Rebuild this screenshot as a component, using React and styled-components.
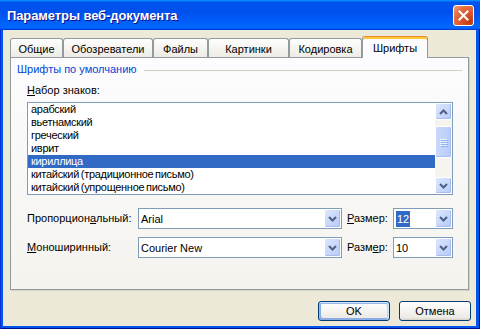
import styled, { createGlobalStyle } from "styled-components";

const GlobalStyle = createGlobalStyle`
  html, body {
    margin: 0;
    padding: 0;
  }
  body {
    width: 480px;
    height: 329px;
    overflow: hidden;
    font-family: "Liberation Sans", Arial, sans-serif;
    font-size: 11px;
    color: #000;
  }
`;

//Style Components :

const Window = styled.div`
  width: 480px;
  height: 329px;
  display: flex;
  flex-direction: column;
  background: #0054e3;
`;

const TitleBar = styled.div`
  height: 30px;
  flex-shrink: 0;
  display: flex;
  align-items: center;
  justify-content: space-between;
  padding: 0 6px 0 7px;
  background: linear-gradient(
    180deg,
    #0997ff,
    #0053ee 8%,
    #0050ee 40%,
    #06f 88%,
    #06f 93%,
    #005bff 95%,
    #003dd7 96%,
    #003dd7
  );
`;

const Title = styled.div`
  font-family: "Liberation Sans", Arial, sans-serif;
  font-weight: 700;
  font-size: 13px;
  color: #fff;
  letter-spacing: -0.1px;
  text-shadow: 1px 1px #0f1089;
`;

const CloseButton = styled.div`
  width: 19px;
  height: 19px;
  border: 1px solid #fff;
  border-radius: 3px;
  display: flex;
  align-items: center;
  justify-content: center;
  background: radial-gradient(
    circle at 85% 85%,
    #c23a10 0%,
    #dd5a2d 45%,
    #e56f44 70%,
    #f2a384 100%
  );
`;

const Frame = styled.div`
  flex: 1;
  display: flex;
  padding: 0 4px 3px 3px;
  background: #0055ea;
  box-shadow: inset 1px 0 #0831d9, inset -1px -1px #00138c;
`;

const Client = styled.div`
  flex: 1;
  display: flex;
  flex-direction: column;
  background: #ece9d8;
  padding: 6px 5px 0 7px;
`;

const TabStrip = styled.div`
  height: 21px;
  display: flex;
  align-items: flex-end;
`;

const Tab = styled.div`
  position: relative;
  box-sizing: border-box;
  width: ${(p) => p.$width}px;
  height: ${(p) => (p.$active ? 22 : 19)}px;
  margin-bottom: ${(p) => (p.$active ? -1 : 0)}px;
  z-index: ${(p) => (p.$active ? 2 : 0)};
  display: flex;
  justify-content: center;
  padding-top: ${(p) => (p.$active ? 5 : 4)}px;
  border: 1px solid #919b9c;
  border-bottom: none;
  border-radius: 3px 3px 0 0;
  background: ${(p) =>
    p.$active
      ? "#fcfcfe"
      : "linear-gradient(180deg, #fefefe, #f4f3ee 60%, #ecebe6)"};
  ${(p) =>
    p.$active &&
    `
    border-top: 1px solid #e68b2c;
    box-shadow: inset 0 2px #ffc73c;
  `}
`;

const Panel = styled.div`
  height: 233px;
  margin-right: 2px;
  border: 1px solid #919b9c;
  box-sizing: border-box;
  background: linear-gradient(180deg, #fcfcfe, #f4f3ee);
  box-shadow: 1px 1px 0 #d6d3c6;
  display: flex;
  flex-direction: column;
`;

const GroupHeading = styled.div`
  height: 14px;
  margin-top: 4px;
  padding: 0 6px;
  display: flex;
  align-items: center;
  gap: 7px;
  color: #0046d5;

  &::after {
    content: "";
    flex: 1;
    height: 1px;
    margin-top: 2px;
    background: #d0d0bf;
  }
`;

const Content = styled.div`
  padding-left: 16px;
  display: flex;
  flex-direction: column;
`;

const FieldLabel = styled.div`
  height: 14px;
  line-height: 14px;
  margin-top: 7px;
`;

const ListBox = styled.div`
  width: 426px;
  height: 93px;
  box-sizing: border-box;
  margin-top: 5px;
  border: 1px solid #7f9db9;
  background: #fff;
  display: flex;
`;

const Items = styled.div`
  flex: 1;
`;

const Item = styled.div`
  height: 13px;
  line-height: 13px;
  padding-left: 3px;
  white-space: nowrap;
  letter-spacing: -0.3px;
  word-spacing: -1px;
  background: ${(p) => (p.$selected ? "#316ac5" : "transparent")};
  color: ${(p) => (p.$selected ? "#fff" : "#000")};
`;

const ScrollBar = styled.div`
  width: 17px;
  display: flex;
  flex-direction: column;
  background: #f5f4ef;
`;

const ScrollButton = styled.div`
  height: 17px;
  box-sizing: border-box;
  border: 1px solid #fff;
  border-radius: 2px;
  background: linear-gradient(135deg, #dce7fd, #b8cbf9);
  box-shadow: inset -1px -1px #a7bdef;
  display: flex;
  align-items: center;
  justify-content: center;
`;

const Track = styled.div`
  flex: 1;
  padding-top: 6px;
`;

const Thumb = styled.div`
  height: 32px;
  box-sizing: border-box;
  border: 1px solid #fff;
  border-radius: 2px;
  background: linear-gradient(90deg, #c9d8fc, #b9ccf9);
  box-shadow: inset -1px -1px #a7bdef;
  display: flex;
  flex-direction: column;
  align-items: center;
  justify-content: center;
  gap: 1px;
`;

const Grip = styled.div`
  width: 7px;
  height: 1px;
  background: #eef4fe;
  box-shadow: 1px 1px #8cb0f8;
`;

const FontGrid = styled.div`
  display: grid;
  grid-template-columns: 111px 204px 51px 60px;
  grid-auto-rows: 21px;
  row-gap: 8px;
  align-items: center;
  margin-top: 13px;
`;

const RowLabel = styled.div`
  padding-left: ${(p) => (p.$inset ? 5 : 0)}px;
  margin-top: -2px;
  white-space: nowrap;
`;

const Combo = styled.div`
  height: 21px;
  box-sizing: border-box;
  border: 1px solid #7f9db9;
  background: #fff;
  display: flex;
  align-items: center;
`;

const ComboText = styled.div`
  flex: 1;
  padding-left: 2px;
  padding-top: 1px;
`;

const Highlight = styled.span`
  background: #316ac5;
  color: #fff;
  padding: 2px 1px;
`;

const DropButton = styled.div`
  width: 17px;
  height: 19px;
  box-sizing: border-box;
  border: 1px solid #fff;
  border-radius: 2px;
  background: linear-gradient(135deg, #dce7fd, #b6c9f8);
  box-shadow: inset -1px -1px #a7bdef;
  display: flex;
  align-items: center;
  justify-content: center;
`;

const Key = styled.span`
  text-decoration: underline;
`;

const ButtonRow = styled.div`
  display: flex;
  justify-content: flex-end;
  gap: 9px;
  margin-top: 11px;
`;

const Button = styled.div`
  width: 72px;
  height: 20px;
  box-sizing: border-box;
  border: 1px solid #003c74;
  border-radius: 3px;
  display: flex;
  align-items: center;
  justify-content: center;
  background: linear-gradient(180deg, #fff, #ecebe6 86%, #d6d0c5);
  box-shadow: ${(p) =>
    p.$default
      ? "inset -1px 1px #cee7ff, inset 1px 2px #98b8ea, inset -2px 2px #bcd4f6, inset 1px -1px #89ade4, inset 2px -2px #89ade4"
      : "none"};
`;

//Icons :

function Chevron({ up }) {
  return (
    <svg width="9" height="6" viewBox="0 0 9 6">
      <path
        d={up ? "M1 5 L4.5 1.5 L8 5" : "M1 1 L4.5 4.5 L8 1"}
        fill="none"
        stroke="#4d6185"
        strokeWidth="2"
      />
    </svg>
  );
}

function CloseIcon() {
  return (
    <svg width="11" height="11" viewBox="0 0 11 11">
      <path
        d="M1.5 1.5 L9.5 9.5 M9.5 1.5 L1.5 9.5"
        stroke="#fff"
        strokeWidth="2"
        strokeLinecap="square"
      />
    </svg>
  );
}

const tabs = [
  { label: "Общие", width: 53 },
  { label: "Обозреватели", width: 90 },
  { label: "Файлы", width: 55 },
  { label: "Картинки", width: 81 },
  { label: "Кодировка", width: 73 },
  { label: "Шрифты", width: 66, active: true },
];

const charsets = [
  "арабский",
  "вьетнамский",
  "греческий",
  "иврит",
  "кириллица",
  "китайский (традиционное письмо)",
  "китайский (упрощенное письмо)",
];

//Component :

function App() {
  return (
    <>
      <GlobalStyle />
      <Window>
        <TitleBar>
          <Title>Параметры веб-документа</Title>
          <CloseButton>
            <CloseIcon />
          </CloseButton>
        </TitleBar>
        <Frame>
          <Client>
            <TabStrip>
              {tabs.map((t) => (
                <Tab key={t.label} $width={t.width} $active={t.active}>
                  {t.label}
                </Tab>
              ))}
            </TabStrip>
            <Panel>
              <GroupHeading>Шрифты по умолчанию</GroupHeading>
              <Content>
                <FieldLabel>
                  <Key>Н</Key>абор знаков:
                </FieldLabel>
                <ListBox>
                  <Items>
                    {charsets.map((c) => (
                      <Item key={c} $selected={c === "кириллица"}>
                        {c}
                      </Item>
                    ))}
                  </Items>
                  <ScrollBar>
                    <ScrollButton>
                      <Chevron up />
                    </ScrollButton>
                    <Track>
                      <Thumb>
                        <Grip />
                        <Grip />
                        <Grip />
                        <Grip />
                      </Thumb>
                    </Track>
                    <ScrollButton>
                      <Chevron />
                    </ScrollButton>
                  </ScrollBar>
                </ListBox>
                <FontGrid>
                  <RowLabel>
                    Пропорцион<Key>а</Key>льный:
                  </RowLabel>
                  <Combo>
                    <ComboText>Arial</ComboText>
                    <DropButton>
                      <Chevron />
                    </DropButton>
                  </Combo>
                  <RowLabel $inset>
                    <Key>Р</Key>азмер:
                  </RowLabel>
                  <Combo>
                    <ComboText>
                      <Highlight>12</Highlight>
                    </ComboText>
                    <DropButton>
                      <Chevron />
                    </DropButton>
                  </Combo>
                  <RowLabel>
                    <Key>М</Key>оноширинный:
                  </RowLabel>
                  <Combo>
                    <ComboText>Courier New</ComboText>
                    <DropButton>
                      <Chevron />
                    </DropButton>
                  </Combo>
                  <RowLabel $inset>
                    Разм<Key>е</Key>р:
                  </RowLabel>
                  <Combo>
                    <ComboText>10</ComboText>
                    <DropButton>
                      <Chevron />
                    </DropButton>
                  </Combo>
                </FontGrid>
              </Content>
            </Panel>
            <ButtonRow>
              <Button $default>OK</Button>
              <Button>Отмена</Button>
            </ButtonRow>
          </Client>
        </Frame>
      </Window>
    </>
  );
}

export default App;
